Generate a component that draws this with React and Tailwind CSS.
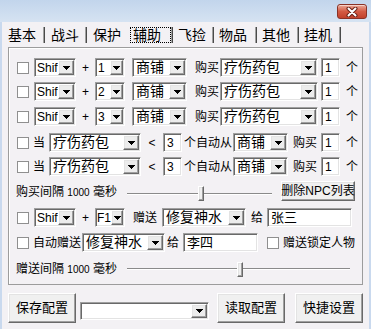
import React from 'react';

const sunken = "border border-t-[#a0a0a0] border-l-[#a0a0a0] border-r-white border-b-white shadow-[inset_1px_1px_0_#696969,inset_-1px_-1px_0_#e3e3e3]";
const raised = "border border-t-white border-l-white border-r-[#696969] border-b-[#696969] shadow-[inset_-1px_-1px_0_#a0a0a0,inset_1px_1px_0_#e3e3e3]";

function Arrow() {
  return (
    <svg width="7" height="4" viewBox="0 0 7 4" shapeRendering="crispEdges">
      <rect x="0" y="0" width="7" height="1" fill="#000" />
      <rect x="1" y="1" width="5" height="1" fill="#000" />
      <rect x="2" y="2" width="3" height="1" fill="#000" />
      <rect x="3" y="3" width="1" height="1" fill="#000" />
    </svg>
  );
}

function Combo({ w, children, big, h = "h-[19px]", bw = "w-[16px]", pl = "pl-[3px]" }) {
  return (
    <div className={`${w} ${h} shrink-0 flex bg-white ${sunken}`}>
      <div className={`flex-1 min-w-0 overflow-hidden whitespace-nowrap ${pl} flex items-center ${big ? "text-[14px]" : "text-[12px]"}`}>
        {children}
      </div>
      <div className={`${bw} my-[1px] mr-[1px] shrink-0 flex items-center justify-center bg-[#ececec] ${raised}`}>
        <Arrow />
      </div>
    </div>
  );
}

function Input({ w, children, big }) {
  return (
    <div className={`${w} h-[19px] shrink-0 bg-white flex items-center pl-[3px] whitespace-nowrap overflow-hidden ${big ? "text-[13px]" : "text-[12px]"} ${sunken}`}>
      {children}
    </div>
  );
}

function Check({ cls = "" }) {
  return <div className={`w-[12px] h-[12px] shrink-0 bg-white border border-[#8f8f8f] ${cls}`} />;
}

function Btn({ w, h, children, cls = "" }) {
  return (
    <div className={`${w} ${h} shrink-0 flex items-center justify-center bg-[#f0f0f0] whitespace-nowrap ${raised} ${cls}`}>
      {children}
    </div>
  );
}

function Slider({ w, pos }) {
  return (
    <div className={`relative ${w} h-[15px] flex items-center shrink-0`}>
      <div className="w-full h-[2px] border-t border-t-[#8a8a8a] border-b border-b-white" />
      <div className={`absolute top-0 ${pos} w-[6px] h-[15px] bg-[#f0f0f0] ${raised}`} />
    </div>
  );
}

function Sep() {
  return (
    <div className="flex h-[16px] shrink-0">
      <div className="w-px h-full bg-[#a0a0a0]" />
      <div className="w-px h-full bg-[#4a4a4a]" />
    </div>
  );
}

export default function App() {
  return (
    <div className="w-[371px] h-[329px] overflow-hidden flex flex-col bg-[#c9d9ee] font-[family-name:'Liberation_Sans','Noto_Sans_CJK_SC',sans-serif] text-black text-[12px]">
      {/* title bar */}
      <div className="h-[22px] shrink-0 flex justify-end items-start pt-[4px] pr-[4px] bg-gradient-to-b from-[#c2d5ec] to-[#d6e3f2]">
        <div className="w-[30px] h-[15px] rounded-[3px] border border-[#8a3226] bg-gradient-to-b from-[#e9a898] via-[#d35a43] to-[#c2412b] flex items-center justify-center shadow-[inset_0_1px_0_rgba(255,255,255,0.5)]">
          <svg width="12" height="10" viewBox="0 0 12 10">
            <path d="M2.5 1.5 L9.5 8.5 M9.5 1.5 L2.5 8.5" stroke="#6a2116" strokeWidth="4" strokeLinecap="round" />
            <path d="M2.5 1.5 L9.5 8.5 M9.5 1.5 L2.5 8.5" stroke="#ffffff" strokeWidth="2" strokeLinecap="round" />
          </svg>
        </div>
      </div>

      {/* body */}
      <div className="flex-1 ml-[2px] mr-[2px] bg-[#f3f1f4] flex flex-col">
        {/* tabs */}
        <div className="h-[25px] shrink-0 flex items-start pt-[5px] pl-[1px] text-[14px] leading-[16px]">
          <div className="w-[42px] h-[16px] flex justify-between pl-[5px]"><span>基本</span><Sep /></div>
          <div className="w-[42px] h-[16px] flex justify-between pl-[6px]"><span>战斗</span><Sep /></div>
          <div className="w-[43px] h-[16px] flex justify-between pl-[6px]"><span>保护</span></div>
          <div className="w-[43px] h-[16px] flex">
            <div className="w-[41px] h-[16px] border border-dotted border-black pl-[2px] leading-[14px]">辅助</div>
            <Sep />
          </div>
          <div className="w-[41px] h-[16px] flex justify-between pl-[5px]"><span>飞捡</span><Sep /></div>
          <div className="w-[43px] h-[16px] flex justify-between pl-[5px]"><span>物品</span><Sep /></div>
          <div className="w-[42px] h-[16px] flex justify-between pl-[5px]"><span>其他</span><Sep /></div>
          <div className="w-[42px] h-[16px] flex justify-between pl-[5px]"><span>挂机</span><Sep /></div>
        </div>

        {/* panel */}
        <div className="ml-[6px] w-[355px] h-[238px] shrink-0 border border-[#9c9c9c] shadow-[inset_1px_1px_0_#ffffff] pt-[10px] pl-[8px] flex flex-col">
          {/* rows 1-3 */}
          {["1", "2", "3"].map((n, i) => (
            <div key={n} className={`flex items-center h-[19px] ${i === 0 ? "" : i === 1 ? "mt-[5px]" : "mt-[6px]"}`}>
              <Check />
              <div className="ml-[5px]"><Combo w="w-[42px]" pl="pl-[2px]">Shift</Combo></div>
              <span className="w-[19px] text-center">+</span>
              <Combo w="w-[30px]" bw="w-[13px]" pl="pl-[2px]">{n}</Combo>
              <div className="ml-[7px]"><Combo w="w-[55px]" big>商铺</Combo></div>
              <span className="ml-[8px] w-[24px] whitespace-nowrap">购买</span>
              <div className="ml-[1px]"><Combo w="w-[98px]" big>疗伤药包</Combo></div>
              <div className="ml-[3px]"><Input w="w-[19px]">1</Input></div>
              <span className="ml-[6px]">个</span>
            </div>
          ))}

          {/* rows 4-5 */}
          {[0, 1].map((i) => (
            <div key={i} className={`flex items-center h-[19px] ${i === 0 ? "mt-[7px]" : "mt-[5px]"}`}>
              <Check />
              <span className="ml-[4px]">当</span>
              <div className="ml-[4px]"><Combo w="w-[92px]" big>疗伤药包</Combo></div>
              <span className="w-[22px] text-center">&lt;</span>
              <Input w="w-[19px]">3</Input>
              <span className="ml-[2px] whitespace-nowrap">个自动从</span>
              <div className="ml-[1px]"><Combo w="w-[55px]" big>商铺</Combo></div>
              <span className="ml-[5px] whitespace-nowrap">购买</span>
              <div className="ml-[4px]"><Input w="w-[19px]">1</Input></div>
              <span className="ml-[6px]">个</span>
            </div>
          ))}

          {/* row 6 */}
          <div className="flex items-start h-[20px] mt-[5px] -ml-[1px]">
            <div className="w-[111px] mt-[4px] whitespace-nowrap leading-[14px]">
              购买间隔 <span className="text-[10px]">1000</span> 毫秒
            </div>
            <div className="mt-[5px]"><Slider w="w-[145px]" pos="left-[71px]" /></div>
            <Btn w="w-[74px]" h="h-[20px]" cls="ml-[9px]">删除NPC列表</Btn>
          </div>

          {/* row 7 */}
          <div className="flex items-center h-[19px] mt-[7px]">
            <Check />
            <div className="ml-[5px]"><Combo w="w-[42px]" pl="pl-[2px]">Shift</Combo></div>
            <span className="w-[19px] text-center">+</span>
            <Combo w="w-[30px]" bw="w-[12px]" pl="pl-[1px]">F1</Combo>
            <span className="ml-[8px] whitespace-nowrap">赠送</span>
            <div className="ml-[5px]"><Combo w="w-[84px]" big>修复神水</Combo></div>
            <span className="ml-[5px]">给</span>
            <div className="ml-[4px]"><Input w="w-[85px]" big>张三</Input></div>
          </div>

          {/* row 8 */}
          <div className="flex items-center h-[19px] mt-[6px]">
            <Check />
            <span className="ml-[4px] whitespace-nowrap">自动赠送</span>
            <div className="ml-[1px]"><Combo w="w-[83px]" big>修复神水</Combo></div>
            <span className="ml-[2px]">给</span>
            <div className="ml-[4px]"><Input w="w-[75px]" big>李四</Input></div>
            <Check cls="ml-[9px]" />
            <span className="ml-[4px] whitespace-nowrap">赠送锁定人物</span>
          </div>

          {/* row 9 */}
          <div className="flex items-center h-[16px] mt-[9px] -ml-[1px]">
            <div className="w-[111px] whitespace-nowrap leading-[14px]">
              赠送间隔 <span className="text-[10px]">1000</span> 毫秒
            </div>
            <Slider w="w-[223px]" pos="left-[110px]" />
          </div>
        </div>

        {/* bottom buttons */}
        <div className="flex items-start mt-[8px] pl-[6px] text-[13px]">
          <Btn w="w-[68px]" h="h-[30px]">保存配置</Btn>
          <div className="ml-[4px] mt-[9px]"><Combo w="w-[129px]" h="h-[18px]"></Combo></div>
          <Btn w="w-[68px]" h="h-[30px]" cls="ml-[8px]">读取配置</Btn>
          <Btn w="w-[68px]" h="h-[30px]" cls="ml-[10px]">快捷设置</Btn>
        </div>
      </div>
    </div>
  );
}
